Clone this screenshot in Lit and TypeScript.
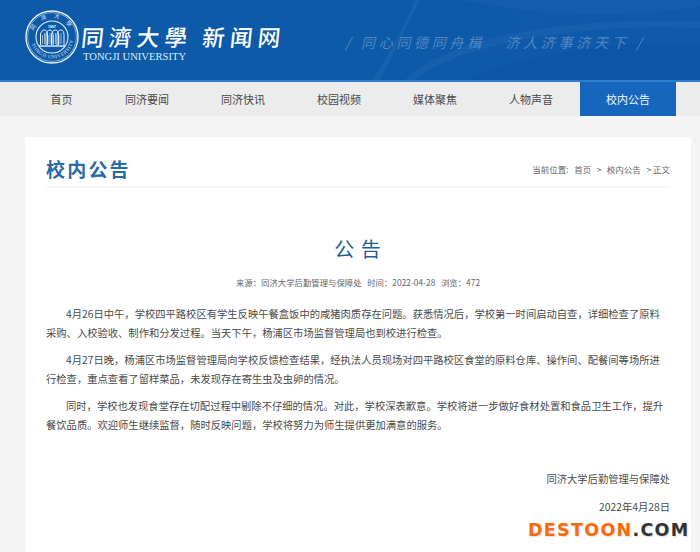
import { LitElement, html, css, svg } from "lit";
import { customElement } from "lit/decorators.js";

const CJK = `"Noto Sans CJK SC", "Liberation Sans", sans-serif`;

@customElement("app-root")
export class AppRoot extends LitElement {
  static styles = css`
    :host { display: block; width: 700px; height: 552px; overflow: hidden; position: relative; background: #f4f4f4; font-family: "Noto Sans CJK SC", "Liberation Sans", sans-serif; }
    header { height: 80px; border-bottom: 2px solid #2f7fd0; background: linear-gradient(90deg, #0c5aa8 0%, #0c5aa8 50%, #1159ab 100%); display: flex; align-items: flex-start; position: relative; overflow: hidden; box-sizing: content-box; }
    .deco { position: absolute; inset: 0; width: 700px; height: 80px; }
    .seal { margin: 10px 0 0 25px; width: 54px; height: 54px; flex: none; position: relative; }
    .brand { margin: 21px 0 0 1px; color: #fff; position: relative; width: 210px; }
    .cn { font-size: 22.5px; line-height: 30px; font-weight: 500; letter-spacing: 5.2px; white-space: pre; transform: skewX(-6deg); transform-origin: left bottom; }
    .en { font-family: "Liberation Serif", serif; font-size: 10.6px; line-height: 12px; margin: 0 0 0 3px; color: #dfe9f6; white-space: nowrap; }
    .slogan { margin: 32px 0 0 55px; font-size: 14px; line-height: 20px; font-style: italic; letter-spacing: 3.7px; color: #5287c4; white-space: pre; position: relative; }
    nav { height: 34px; display: flex; padding-left: 25px; background: #ececec; color: #4a4a4a; font-size: 11px; }
    nav a { width: 96px; box-sizing: border-box; padding-right: 2px; display: flex; align-items: center; justify-content: center; }
    nav a:first-child { width: 75px; }
    nav a.on { background: #1666bd; color: #f2f6fb; padding-right: 0; }
    .card { margin: 21px 9px 0 25px; background: #fff; padding: 0 21px 0 21px; height: 420px; }
    .crumbbar { height: 49px; display: flex; justify-content: space-between; align-items: flex-end; border-bottom: 2px solid #f6f6f6; }
    .sect { font-size: 19px; line-height: 24px; letter-spacing: 2.2px; color: #2a6aa5; font-weight: 700; margin: 0 0 5px 0; }
    .crumbs { font-size: 8.5px; line-height: 12px; color: #666; margin-bottom: 11px; display: flex; gap: 5.5px; white-space: pre; }
    h1 { margin: 47px 0 0; text-align: center; font-size: 20px; line-height: 28px; font-weight: 400; color: #1f5f94; letter-spacing: 1px; }
    .meta { margin-top: 13px; text-align: center; font-size: 8.4px; line-height: 12px; color: #666; white-space: pre; }
    .body { margin-top: 16px; padding-right: 3px; font-size: 10.3px; line-height: 19px; color: #4a4a4a; }
    .body p { margin: 0 0 8px; text-indent: 20px; }
    .sign { margin-top: 37px; text-align: right; font-size: 10.3px; line-height: 16px; color: #4a4a4a; }
    .sign div + div { margin-top: 12px; }
    .mark { position: absolute; left: 528px; top: 519px; font-family: "DejaVu Sans", sans-serif; font-weight: 700; font-size: 17.5px; line-height: 22px; letter-spacing: 1.3px; color: #f96a0a; white-space: pre; text-shadow: 1px 1px 1px #ddd; }
    .mark span { color: #333; }
  `;

  render() {
    return html`
      <header>
        <svg class="deco" viewBox="0 0 700 80" fill="none">
          <path d="M380 80 C 395 50 410 20 420 0 L 415 0 C 405 25 390 55 372 80Z" fill="#2a6fb8" opacity=".35"></path>
          <path d="M405 80 C 440 45 540 15 700 22 L 700 28 C 560 22 450 50 415 80Z" fill="#2a6fb8" opacity=".28"></path>
          <path d="M460 0 C 540 15 620 20 700 6 L 700 0Z" fill="#2a6fb8" opacity=".2"></path>
          <path d="M470 80 C 520 55 610 40 700 45 L 700 80Z" fill="#0a4f9f" opacity=".35"></path>
        </svg>
        <div class="seal">
          <svg viewBox="0 0 54 54" width="54" height="54" fill="none">
            <defs>
              <path id="top" d="M8 27 A19 19 0 0 1 46 27"></path>
              <path id="bot" d="M5.5 27 A21.5 21.5 0 0 0 48.5 27"></path>
            </defs>
            <circle cx="27" cy="27" r="26" stroke="#e4edf7" stroke-width="1.4"></circle>
            <circle cx="27" cy="27" r="24.4" stroke="#cfdff0" stroke-width=".6"></circle>
            <circle cx="27" cy="27" r="16" stroke="#e4edf7" stroke-width="1.1"></circle>
            <text font-size="5.5" fill="#e4edf7" font-family=${CJK} letter-spacing="7"><textPath href="#top" startOffset="6">同濟大學</textPath></text>
            <text font-size="5" fill="#dbe7f4" font-family="Liberation Serif, serif" letter-spacing=".5"><textPath href="#bot" startOffset="7">TONGJI UNIVERSITY</textPath></text>
            <text x="27" y="18" font-size="3.6" font-weight="700" text-anchor="middle" fill="#fff" font-family="Liberation Sans, sans-serif">1907</text>
            ${[15.5, 21, 26.5, 32].map((x) => svg`
              <path d="M${x} 35 L${x} 25 C${x} 22 ${x + 2} 20 ${x + 4} 20 C${x + 6} 20 ${x + 7} 22 ${x + 7} 25 L${x + 7} 35" stroke="#e8f0f9" stroke-width="1"></path>
              <path d="M${x + 2} 34 L${x + 2} 25 M${x + 4} 34 L${x + 4} 23" stroke="#cfdff0" stroke-width=".7"></path>`)}
            <path d="M14 36 H40" stroke="#e8f0f9" stroke-width="1.4"></path>
          </svg>
        </div>
        <div class="brand">
          <div class="cn">同濟大學 新闻网</div>
          <div class="en">TONGJI UNIVERSITY</div>
        </div>
        <div class="slogan">/ 同心同德同舟楫   济人济事济天下 /</div>
      </header>
      <nav>
        <a>首页</a><a>同济要闻</a><a>同济快讯</a><a>校园视频</a><a>媒体聚焦</a><a>人物声音</a><a class="on">校内公告</a>
      </nav>
      <section class="card">
        <div class="crumbbar">
          <div class="sect">校内公告</div>
          <div class="crumbs"><span>当前位置:</span><span>首页</span><span>&gt;</span><span>校内公告</span><span>&gt; 正文</span></div>
        </div>
        <h1>公 告</h1>
        <div class="meta">来源：同济大学后勤管理与保障处   时间：2022-04-28   浏览：472</div>
        <div class="body">
          <p>4月26日中午，学校四平路校区有学生反映午餐盒饭中的咸猪肉质存在问题。获悉情况后，学校第一时间启动自查，详细检查了原料采购、入校验收、制作和分发过程。当天下午，杨浦区市场监督管理局也到校进行检查。</p>
          <p>4月27日晚，杨浦区市场监督管理局向学校反馈检查结果，经执法人员现场对四平路校区食堂的原料仓库、操作间、配餐间等场所进行检查，重点查看了留样菜品，未发现存在寄生虫及虫卵的情况。</p>
          <p>同时，学校也发现食堂存在切配过程中剔除不仔细的情况。对此，学校深表歉意。学校将进一步做好食材处置和食品卫生工作，提升餐饮品质。欢迎师生继续监督，随时反映问题，学校将努力为师生提供更加满意的服务。</p>
        </div>
        <div class="sign"><div>同济大学后勤管理与保障处</div><div>2022年4月28日</div></div>
      </section>
      <div class="mark">DESTOON<span>.COM</span></div>
    `;
  }
}
